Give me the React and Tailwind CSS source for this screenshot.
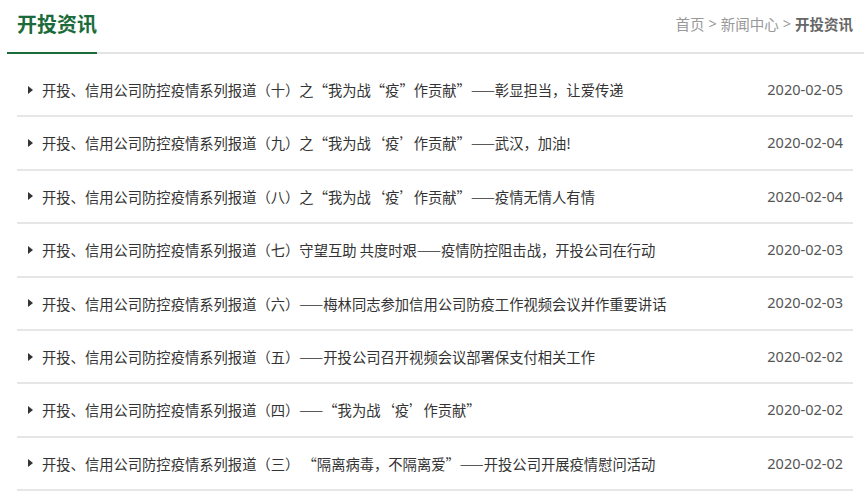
import React from "react";

const NEWS = [
  { title: "开投、信用公司防控疫情系列报道（十）之“我为战“疫”作贡献”——彰显担当，让爱传递", date: "2020-02-05" },
  { title: "开投、信用公司防控疫情系列报道（九）之“我为战‘疫’作贡献”——武汉，加油!", date: "2020-02-04" },
  { title: "开投、信用公司防控疫情系列报道（八）之“我为战‘疫’作贡献”——疫情无情人有情", date: "2020-02-04" },
  { title: "开投、信用公司防控疫情系列报道（七）守望互助 共度时艰——疫情防控阻击战，开投公司在行动", date: "2020-02-03" },
  { title: "开投、信用公司防控疫情系列报道（六）——梅林同志参加信用公司防疫工作视频会议并作重要讲话", date: "2020-02-03" },
  { title: "开投、信用公司防控疫情系列报道（五）——开投公司召开视频会议部署保支付相关工作", date: "2020-02-02" },
  { title: "开投、信用公司防控疫情系列报道（四）——“我为战‘疫’作贡献”", date: "2020-02-02" },
  { title: "开投、信用公司防控疫情系列报道（三） “隔离病毒，不隔离爱”——开投公司开展疫情慰问活动", date: "2020-02-02" },
];

const CJK = { fontFamily: '"Noto Sans CJK SC", "Noto Sans", sans-serif' };
const LATIN = { fontFamily: '"Noto Sans", "Noto Sans CJK SC", sans-serif' };

export default function App() {
  return (
    <div className="w-[865px] h-[500px] bg-white overflow-hidden" style={CJK}>
      {/* Header */}
      <div className="ml-[7px] mr-[1px] flex items-end justify-between border-b-2 border-[#e4e4e4] h-[54px]">
        <div className="relative h-full flex items-center pl-[10px] pb-[4px]">
          <span className="text-[20px] font-bold text-[#1b6b3a] leading-none">开投资讯</span>
          <div className="absolute left-0 right-0 bottom-[-2px] h-[2px] bg-[#1b6b3a]" />
        </div>
        <div className="h-full flex items-center pb-[4px] pr-[11px] text-[14.5px] text-[#999]">
          <span>首页</span>
          <span className="mx-[4px]" style={LATIN}>&gt;</span>
          <span>新闻中心</span>
          <span className="mx-[4px]" style={LATIN}>&gt;</span>
          <span className="font-bold text-[#666]">开投资讯</span>
        </div>
      </div>

      {/* List */}
      <ul className="ml-[17px] w-[836px] mt-[10px]">
        {NEWS.map((n, i) => (
          <li
            key={i}
            className="h-[53.4px] flex items-center justify-between border-b-2 border-[#e6e6e6] pl-[11px] pr-[10px]"
          >
            <div className="flex items-center">
              <span className="w-0 h-0 border-y-[4px] border-y-transparent border-l-[5px] border-l-[#333] mr-[9px]" />
              <span className="text-[14.3px] text-[#333]">{n.title}</span>
            </div>
            <span className="text-[14.5px] text-[#555]" style={LATIN}>{n.date}</span>
          </li>
        ))}
      </ul>
    </div>
  );
}
